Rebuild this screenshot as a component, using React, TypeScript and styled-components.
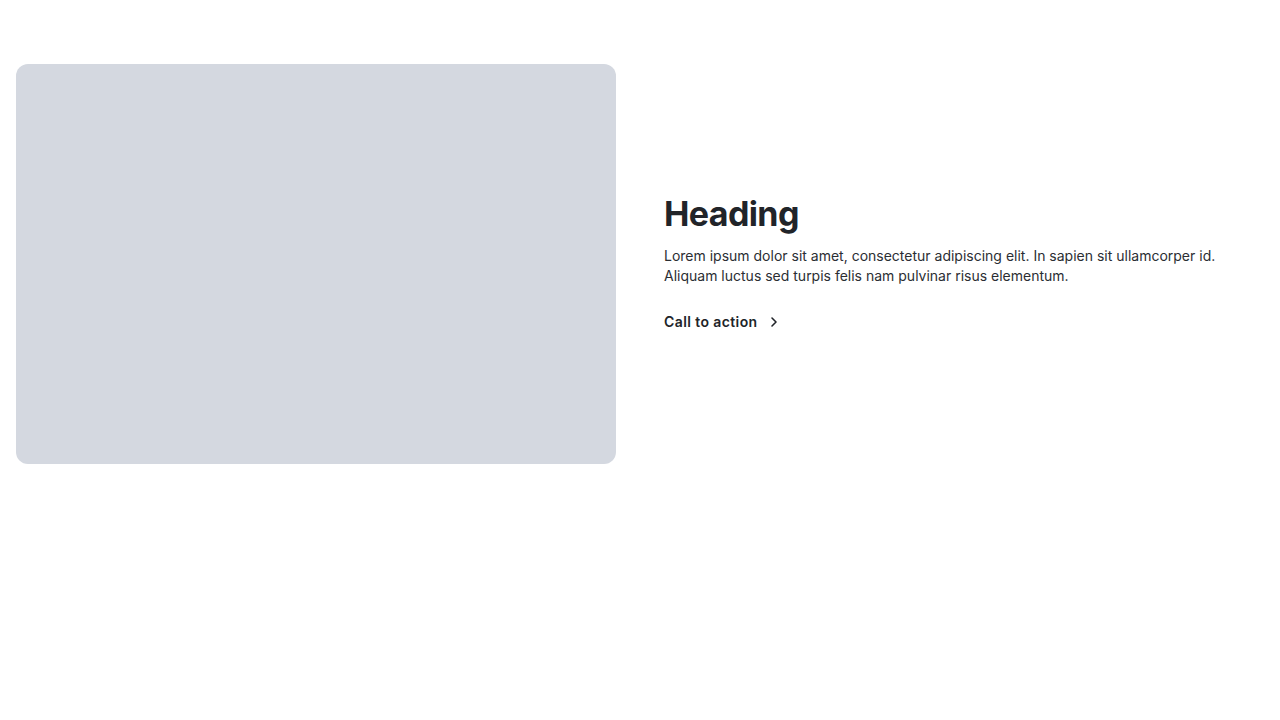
import React from 'react';
import styled, { createGlobalStyle } from 'styled-components';

const GlobalStyle = createGlobalStyle`
    body {
        margin: 0;
        background: #ffffff;
        font-family: Inter, "Liberation Sans", sans-serif;
        color: #212429;
    }
`;

const ChevronRight: React.FC = () => (
    <svg width="16" height="16" viewBox="0 0 24 24" fill="none" stroke="currentColor" strokeWidth="2.4" strokeLinecap="round" strokeLinejoin="round">
        <path d="M9 6l6 6-6 6" />
    </svg>
);

const App: React.FC = () => {
    return (
        <>
            <GlobalStyle />
            <Section>
                <ImagePlaceholder />
                <Content>
                    <Heading>Heading</Heading>
                    <Body>
                        Lorem ipsum dolor sit amet, consectetur adipiscing elit. In sapien sit ullamcorper id.
                        Aliquam luctus sed turpis felis nam pulvinar risus elementum.
                    </Body>
                    <CallToAction href="#">
                        Call to action <ChevronRight />
                    </CallToAction>
                </Content>
            </Section>
        </>
    );
};

export default App;

const Section = styled.section`
    display: grid;
    grid-template-columns: 600px 1fr;
    align-items: center;
    column-gap: 48px;
    padding: 64px 16px;
`;

const ImagePlaceholder = styled.div`
    height: 400px;
    border-radius: 12px;
    background-color: #d4d8e0;
`;

const Content = styled.div`
    display: flex;
    flex-direction: column;
    align-items: flex-start;
`;

const Heading = styled.h2`
    margin: 0 0 12px;
    font-size: 34px;
    line-height: 40px;
    font-weight: 700;
    letter-spacing: -0.6px;
    color: #212429;
`;

const Body = styled.p`
    margin: 0 0 24px;
    font-size: 14px;
    line-height: 20px;
    max-width: 560px;
    color: #2b2e33;
`;

const CallToAction = styled.a`
    display: inline-flex;
    align-items: center;
    gap: 8px;
    font-size: 14px;
    line-height: 24px;
    font-weight: 600;
    letter-spacing: 0.4px;
    color: #212429;
    text-decoration: none;
`;
